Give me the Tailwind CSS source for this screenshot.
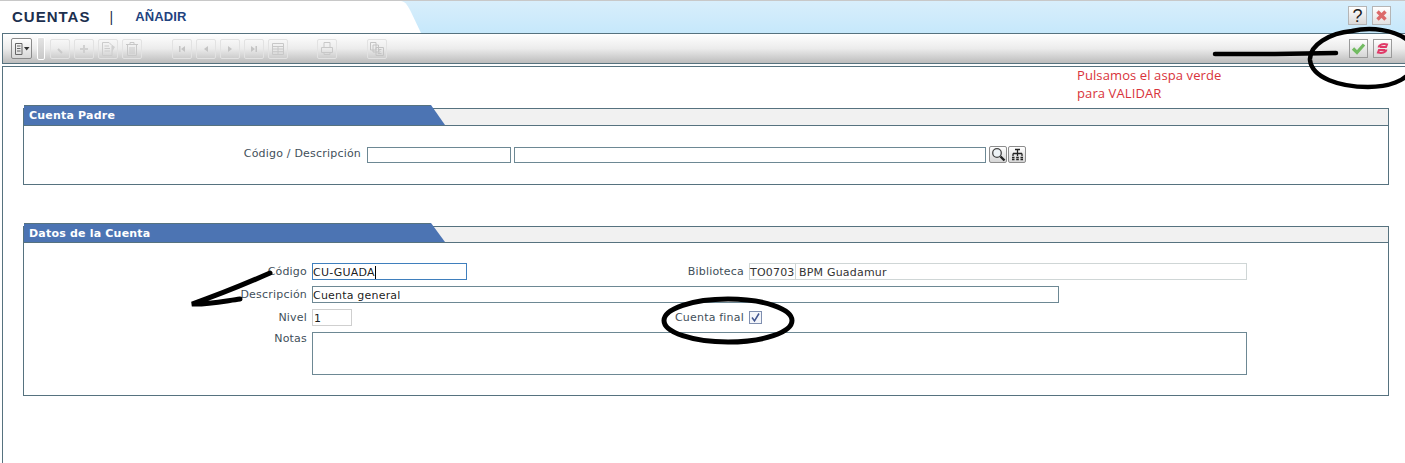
<!DOCTYPE html>
<html lang="es">
<head>
    <meta charset="UTF-8">
    <title>Cuentas</title>
    <script src="https://cdn.jsdelivr.net/npm/@tailwindcss/browser@4"></script>
</head>
<body class="relative w-[1405px] h-[463px] overflow-hidden bg-white font-['DejaVu_Sans',sans-serif] text-[11px] tracking-[0.2px] text-[#3f4f5a]">

    <!-- title bar -->
    <div class="flex h-[33px] border-t border-[#c8c8c8] bg-gradient-to-b from-[#d8eefb] to-[#c6e8fb]">
        <div class="flex items-center w-[398px] pl-[12px] bg-white font-['Liberation_Sans',sans-serif] font-bold">
            <span class="text-[15px] tracking-[1px] text-[#1c2f4e]">CUENTAS</span>
            <span class="ml-[19px] text-[14px] font-normal text-[#1c2f4e]">|</span>
            <span class="ml-[22px] text-[13px] tracking-[0.1px] text-[#1f437f]">AÑADIR</span>
        </div>
        <svg class="w-[26px] h-[32px]" viewBox="0 0 26 32"><path d="M0 0H3C8 1 10 5 13 11L23 32H0Z" fill="#fff"/></svg>
        <div class="flex gap-[5px] ml-auto mr-[14px] mt-[5px]">
            <div class="flex items-center justify-center w-[19px] h-[19px] border border-[#b5b5b5] bg-gradient-to-b from-white to-[#d9d9d9] font-['Liberation_Sans',sans-serif] text-[18px] leading-none text-[#222]">?</div>
            <div class="flex items-center justify-center w-[19px] h-[19px] border border-[#b5b5b5] bg-gradient-to-b from-white to-[#e2e2e2]">
                <svg class="w-[13px] h-[13px]" viewBox="0 0 13 13"><path d="M2.5 2.5L10.5 10.5M10.5 2.5L2.5 10.5" stroke="#dc6a6a" stroke-width="3.4"/></svg>
            </div>
        </div>
    </div>

    <!-- toolbar -->
    <div class="flex items-center h-[31px] ml-[2px] pl-[8px] border-y border-l border-[#56727f] bg-gradient-to-b from-white via-[#ececec] to-[#bdbdbd]">
        <div class="flex items-center justify-center w-[21px] h-[21px] border border-[#8a8a8a] rounded-[2px] bg-gradient-to-b from-white to-[#d8d8d8]">
            <svg class="w-[16px] h-[14px]" viewBox="0 0 16 14" fill="none"><path d="M1.5 1.5H8V12.5H1.5ZM3 4H6.5M3 6.5H6.5M3 9H6.5" stroke="#666"/><path d="M10 5H15.5L12.7 8.5Z" fill="#333"/></svg>
        </div>
        <div class="w-[8px] h-[23px] ml-[5px] border border-white rounded-[2px] bg-gradient-to-b from-[#e4e4e4] to-[#c8c8c8]"></div>
        <div class="flex gap-[4px] ml-[5px]">
            <div class="flex items-center justify-center w-[20px] h-[20px] border border-[#e2e2e2] rounded-[2px]"><svg class="w-[14px] h-[14px]" viewBox="0 0 14 14"><path d="M5 7L9 11" stroke="#cacaca" stroke-width="2"/></svg></div>
            <div class="flex items-center justify-center w-[20px] h-[20px] border border-[#e2e2e2] rounded-[2px]"><svg class="w-[14px] h-[14px]" viewBox="0 0 14 14"><path d="M7 3V11M3 7H11" stroke="#d0d0d0" stroke-width="2"/></svg></div>
            <div class="flex items-center justify-center w-[20px] h-[20px] border border-[#e2e2e2] rounded-[2px]"><svg class="w-[16px] h-[16px]" viewBox="0 0 16 16" fill="none"><path d="M2.5 1.5H9L12 4.5V14.5H2.5ZM4.5 5H9M4.5 7.5H10M4.5 10H10" stroke="#cccccc"/><path d="M12 4L15 6L12 11Z" fill="#d0d0d0"/></svg></div>
            <div class="flex items-center justify-center w-[20px] h-[20px] border border-[#e2e2e2] rounded-[2px]"><svg class="w-[16px] h-[16px]" viewBox="0 0 16 16" fill="none"><path d="M2 3.5H14M6 3V1.5H10V3M3.5 4V14.5H12.5V4M6 6V13M8 6V13M10 6V13" stroke="#c8c8c8"/></svg></div>
        </div>
        <div class="flex gap-[4px] ml-[30px]">
            <div class="flex items-center justify-center w-[20px] h-[20px] border border-[#e2e2e2] rounded-[2px]"><svg class="w-[10px] h-[10px]" viewBox="0 0 10 10"><path d="M2 2V8H3.5V2ZM8 2L4 5L8 8Z" fill="#c4c4c4"/></svg></div>
            <div class="flex items-center justify-center w-[20px] h-[20px] border border-[#e2e2e2] rounded-[2px]"><svg class="w-[10px] h-[10px]" viewBox="0 0 10 10"><path d="M7 2L3 5L7 8Z" fill="#c4c4c4"/></svg></div>
            <div class="flex items-center justify-center w-[20px] h-[20px] border border-[#e2e2e2] rounded-[2px]"><svg class="w-[10px] h-[10px]" viewBox="0 0 10 10"><path d="M3 2L7 5L3 8Z" fill="#c4c4c4"/></svg></div>
            <div class="flex items-center justify-center w-[20px] h-[20px] border border-[#e2e2e2] rounded-[2px]"><svg class="w-[10px] h-[10px]" viewBox="0 0 10 10"><path d="M2 2L6 5L2 8ZM6.5 2V8H8V2Z" fill="#c4c4c4"/></svg></div>
            <div class="flex items-center justify-center w-[20px] h-[20px] border border-[#e2e2e2] rounded-[2px]"><svg class="w-[14px] h-[14px]" viewBox="0 0 14 14" fill="none"><path d="M1.5 1.5H12.5V12.5H1.5ZM1.5 4.5H12.5M1.5 7H12.5M1.5 9.7H12.5M7 4.5V12.5" stroke="#c8c8c8"/></svg></div>
        </div>
        <div class="flex items-center justify-center w-[20px] h-[20px] ml-[29px] border border-[#e2e2e2] rounded-[2px]"><svg class="w-[14px] h-[15px]" viewBox="0 0 14 15" fill="none"><path d="M4 6V1.5H10V6M1.5 6.5H12.5V11.5H1.5ZM4 11.5V13.5H10V11.5" stroke="#c8c8c8"/></svg></div>
        <div class="flex items-center justify-center w-[20px] h-[20px] ml-[30px] border border-[#e2e2e2] rounded-[2px]"><svg class="w-[16px] h-[16px]" viewBox="0 0 16 16" fill="none"><path d="M1.5 1.5H7V9H1.5ZM4 4H9.5V11H4ZM7 6.5H14.5V14.5H7ZM12.5 8.5H9L11 10.5L9 12.5H12.5" stroke="#c4c4c4"/></svg></div>
        <div class="flex gap-[5px] ml-auto mr-[13px]">
            <div class="flex items-center justify-center w-[19px] h-[19px] border border-[#9a9a9a] bg-gradient-to-b from-white to-[#d5d5d5]">
                <svg class="w-[15px] h-[13px]" viewBox="0 0 15 13" fill="none"><path d="M2 6.5L6 10.5L13 2.5" stroke="#72bb62" stroke-width="3.2"/></svg>
            </div>
            <div class="flex items-center justify-center w-[19px] h-[19px] border border-[#9a9a9a] bg-gradient-to-b from-white to-[#d5d5d5]">
                <svg class="w-[13px] h-[13px]" viewBox="0 0 13 13" fill="none"><path d="M2.5 5.5C3 2.5 7 1.5 11 2.5L10 5H4M10.5 7.5C10 10.5 6 11.5 2 10.5L3 8H9" stroke="#e03a68" stroke-width="2"/></svg>
            </div>
        </div>
    </div>

    <!-- content -->
    <div class="h-[397px] mt-[2px] ml-[2px] pl-[20px] pr-[16px] pt-[41px] border-t border-l border-[#56727f]">

        <!-- Cuenta Padre -->
        <div class="border border-[#56727f]">
            <div class="flex h-[17px] border-b border-[#56727f] bg-[#f1f1f1]">
                <div class="-mt-[4px] flex shrink-0 h-[20px]">
                    <div class="w-[406px] pl-[5px] border-t border-[#56727f] bg-[#4c74b3] text-[11px] font-bold leading-[19px] text-white">Cuenta Padre</div>
                    <svg class="w-[16px] h-[20px]" viewBox="0 0 16 20"><path d="M0 0H1L15 20H0Z" fill="#4c74b3"/></svg>
                </div>
            </div>
            <div class="flex items-center h-[58px] pb-[1px]">
                <span class="w-[337px] text-right">Código / Descripción</span>
                <div class="w-[144px] h-[16px] ml-[6px] border border-[#6d8894]"></div>
                <div class="w-[472px] h-[16px] ml-[3px] border border-[#6d8894]"></div>
                <div class="flex items-center justify-center w-[18px] h-[17px] ml-[3px] border border-[#8d8d8d] rounded-[2px] bg-gradient-to-b from-white to-[#d6d6d6]">
                    <svg class="w-[15px] h-[15px]" viewBox="0 0 15 15" fill="none"><circle cx="6" cy="6" r="4.3" stroke="#444" stroke-width="1.3" fill="#eef3f6"/><path d="M9.5 9.5L13.5 13.5" stroke="#222" stroke-width="2.4"/></svg>
                </div>
                <div class="flex items-center justify-center w-[18px] h-[17px] ml-[1px] border border-[#8d8d8d] rounded-[2px] bg-gradient-to-b from-white to-[#d6d6d6]">
                    <svg class="w-[13px] h-[13px]" viewBox="0 0 13 13" fill="none"><path d="M4 1.5H9M6.5 2V5M2 5.5H11M2 5.5V8M6.5 5.5V8M11 5.5V8M1 9.5H3.5M5.2 9.5H7.8M9.5 9.5H12M1 11.5H3.5M5.2 11.5H7.8M9.5 11.5H12" stroke="#222" stroke-width="1.3"/></svg>
                </div>
            </div>
        </div>

        <!-- Datos de la Cuenta -->
        <div class="mt-[41px] border border-[#56727f]">
            <div class="flex h-[16px] border-b border-[#56727f] bg-[#f1f1f1]">
                <div class="-mt-[4px] flex shrink-0 h-[19px]">
                    <div class="w-[406px] pl-[5px] border-t border-[#56727f] bg-[#4c74b3] text-[11px] font-bold leading-[19px] text-white">Datos de la Cuenta</div>
                    <svg class="w-[16px] h-[19px]" viewBox="0 0 16 19"><path d="M0 0H1L15 19H0Z" fill="#4c74b3"/></svg>
                </div>
            </div>
            <div class="flex flex-col gap-[6px] h-[152px] pt-[20px] text-black/90">
                <div class="flex items-center h-[17px]">
                    <span class="w-[283px] pt-[1px] text-right text-[#3f4f5a]">Código</span>
                    <div class="w-[155px] h-[17px] ml-[5px] border border-[#3f7fbd] leading-[17px]">CU-GUADA<span class="border-l border-black"></span></div>
                    <span class="w-[277px] pt-[1px] text-right text-[#3f4f5a]">Biblioteca</span>
                    <div class="flex w-[498px] h-[17px] ml-[5px] border border-[#cfd6d6] leading-[17px] text-[#333]">
                        <span class="w-[46px] border-r border-[#cfd6d6]">TO0703</span>
                        <span class="pl-[3px]">BPM Guadamur</span>
                    </div>
                </div>
                <div class="flex items-center h-[17px]">
                    <span class="w-[283px] pt-[1px] text-right text-[#3f4f5a]">Descripción</span>
                    <div class="w-[747px] h-[17px] ml-[5px] border border-[#6d8894] leading-[17px]">Cuenta general</div>
                </div>
                <div class="flex items-center h-[17px]">
                    <span class="w-[283px] pt-[1px] text-right text-[#3f4f5a]">Nivel</span>
                    <div class="w-[40px] h-[17px] ml-[5px] pl-[1px] border border-[#cfcfcf] leading-[17px]">1</div>
                    <span class="w-[392px] pt-[1px] text-right text-[#3f4f5a]">Cuenta final</span>
                    <div class="flex items-center justify-center w-[13px] h-[13px] ml-[5px] border border-[#7f8fb0] bg-[#f3f5fa]">
                        <svg class="w-[11px] h-[11px]" viewBox="0 0 11 11" fill="none"><path d="M2 5.5L4.5 9L9 1.5" stroke="#41558f" stroke-width="1.5"/></svg>
                    </div>
                </div>
                <div class="flex">
                    <span class="w-[283px] text-right text-[#3f4f5a] leading-[13px]">Notas</span>
                    <div class="w-[935px] h-[43px] ml-[5px] border border-[#6d8894]"></div>
                </div>
            </div>
        </div>
    </div>

    <!-- hand-drawn notes over the capture -->
    <p class="absolute left-[1077px] top-[66px] font-['Open_Sans',sans-serif] text-[13px] tracking-[0.1px] leading-[18px] text-[#d8333b]">Pulsamos el aspa verde<br>para VALIDAR</p>
    <svg class="absolute inset-0 pointer-events-none" width="1405" height="463" fill="none" stroke="#000" stroke-linecap="round">
        <path d="M1215 54H1275L1336 53" stroke-width="4.5"/>
        <path d="M1352 31C1330 33 1309 45 1310 60C1312 78 1340 87 1368 87C1390 87 1405 80 1410 72M1352 31C1370 27 1395 29 1410 42" stroke-width="4.5"/>
        <path d="M270 273C245 284 215 296 192 304C205 305 225 301 240 299" stroke-width="5"/>
        <ellipse cx="728" cy="320.500" rx="64" ry="21.500" stroke-width="5"/>
    </svg>
</body>
</html>
